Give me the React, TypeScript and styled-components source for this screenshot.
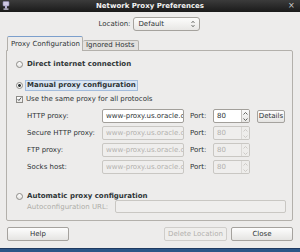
import React from "react"
import styled, { createGlobalStyle } from "styled-components"

const GlobalStyle = createGlobalStyle`
  html, body {
    margin: 0;
    padding: 0;
    background: #edeceb;
  }
  body {
    font-family: "DejaVu Sans", "Liberation Sans", sans-serif;
    font-size: 7px;
    color: #2e3436;
  }
  * {
    box-sizing: border-box;
  }
`

const Window = styled.div`
  width: 300px;
  height: 252px;
  display: flex;
  flex-direction: column;
  background: #edeceb;
  overflow: hidden;
`

const TitleBar = styled.div`
  height: 12px;
  flex: none;
  display: grid;
  grid-template-columns: 12px 1fr 12px;
  align-items: center;
  background: linear-gradient(#3b3b3b, #1a1a1a);
  color: #f2f2f2;
  font-weight: bold;
  font-size: 7px;
  line-height: 12px;
`

const Title = styled.div`
  text-align: center;
`

const CloseMark = styled.div`
  color: #cfcfcf;
  font-size: 8px;
  font-weight: normal;
  text-align: left;
`

const Content = styled.div`
  display: flex;
  flex-direction: column;
  padding: 0 7px 0 6px;
`

const LocationRow = styled.div`
  margin-top: 5px;
  height: 14px;
  display: flex;
  align-items: center;
  justify-content: center;
  gap: 3px;
`

const Combo = styled.div`
  width: 67px;
  height: 14px;
  border: 1px solid #a5a29d;
  border-radius: 3px;
  background: linear-gradient(#fcfcfb, #e8e7e5);
  display: flex;
  align-items: center;
  justify-content: space-between;
  padding: 0 4px 0 4px;
`

const Tabs = styled.div`
  margin-top: 5px;
  height: 15px;
  display: flex;
  align-items: flex-end;
  padding-left: 1px;
  margin-bottom: -1px;
  position: relative;
  z-index: 1;
`

const Tab = styled.div<{ $active?: boolean }>`
  width: ${(p) => (p.$active ? 76 : 56)}px;
  height: ${(p) => (p.$active ? 15 : 11)}px;
  border: 1px solid #b3b0ab;
  border-top-color: ${(p) => (p.$active ? "#7c9fcc" : "#b3b0ab")};
  border-bottom: ${(p) => (p.$active ? "none" : "1px solid #b3b0ab")};
  border-left: ${(p) => (p.$active ? "1px solid #b3b0ab" : "none")};
  border-radius: 2px 2px 0 0;
  background: ${(p) => (p.$active ? "#edeceb" : "#e3e1de")};
  padding-left: 3px;
  line-height: ${(p) => (p.$active ? 14 : 9)}px;
  white-space: nowrap;
`

const Panel = styled.div`
  height: 171px;
  border: 1px solid #b3b0ab;
  border-radius: 0 2px 2px 2px;
  padding-left: 9px;
  display: flex;
  flex-direction: column;
`

const OptionRow = styled.div<{ $top: number; $h?: number }>`
  margin-top: ${(p) => p.$top}px;
  height: ${(p) => p.$h ?? 12}px;
  display: flex;
  align-items: center;
  gap: 3px;
  white-space: nowrap;
`

const Radio = styled.div<{ $checked?: boolean }>`
  width: 7px;
  height: 7px;
  border-radius: 50%;
  border: 1px solid #8d8b87;
  background: ${(p) =>
    p.$checked
      ? "radial-gradient(circle, #2e3436 0 1.2px, #f8f8f7 1.6px)"
      : "linear-gradient(#ffffff, #e4e3e1)"};
  flex: none;
`

const Check = styled.div`
  width: 7px;
  height: 7px;
  border: 1px solid #8d8b87;
  background: linear-gradient(#ffffff, #e8e7e5);
  flex: none;
  display: flex;
  align-items: center;
  justify-content: center;
`

const BoldLabel = styled.span<{ $focus?: boolean }>`
  font-weight: bold;
  line-height: 9px;
  padding: 0 1px;
  margin-left: -1px;
  border: 1px solid ${(p) => (p.$focus ? "#a3bcdc" : "transparent")};
  background: ${(p) => (p.$focus ? "#dbe6f3" : "transparent")};
`

const ProxyRow = styled.div<{ $top: number; $h?: number }>`
  margin-top: ${(p) => p.$top}px;
  height: ${(p) => p.$h ?? 14}px;
  display: flex;
  align-items: center;
  padding-left: 11px;
  white-space: nowrap;
`

const FieldLabel = styled.div<{ $w: number; $disabled?: boolean }>`
  width: ${(p) => p.$w}px;
  flex: none;
  color: ${(p) => (p.$disabled ? "#aeaca8" : "#2e3436")};
`

const Entry = styled.div<{ $w: number; $disabled?: boolean }>`
  width: ${(p) => p.$w}px;
  height: 100%;
  flex: none;
  border: 1px solid ${(p) => (p.$disabled ? "#c9c7c3" : "#a29f9a")};
  border-radius: 2px;
  background: ${(p) => (p.$disabled ? "#efeeed" : "#ffffff")};
  color: ${(p) => (p.$disabled ? "#b3b1ad" : "#2e3436")};
  padding-left: 3px;
  display: flex;
  align-items: center;
  overflow: hidden;
  white-space: nowrap;
`

const PortLabel = styled.div`
  width: 23px;
  margin-left: 6px;
  flex: none;
  color: #2e3436;
`

const Spin = styled.div<{ $disabled?: boolean }>`
  width: 37px;
  height: 100%;
  flex: none;
  border: 1px solid ${(p) => (p.$disabled ? "#c9c7c3" : "#a29f9a")};
  border-radius: 2px;
  background: ${(p) => (p.$disabled ? "#efeeed" : "#ffffff")};
  color: ${(p) => (p.$disabled ? "#b3b1ad" : "#2e3436")};
  display: flex;
  overflow: hidden;
`

const SpinText = styled.div`
  flex: 1;
  padding-left: 3px;
  display: flex;
  align-items: center;
`

const SpinButtons = styled.div<{ $disabled?: boolean }>`
  width: 8px;
  flex: none;
  border-left: 1px solid ${(p) => (p.$disabled ? "#dad8d5" : "#c4c2be")};
  background: ${(p) => (p.$disabled ? "#eeedeb" : "linear-gradient(#fafafa, #e7e6e4)")};
  display: flex;
  flex-direction: column;
  align-items: center;
  justify-content: space-around;
`

const Button = styled.div<{ $w: number; $disabled?: boolean; $gap?: number }>`
  width: ${(p) => p.$w}px;
  height: 14px;
  flex: none;
  margin-left: ${(p) => p.$gap ?? 0}px;
  border: 1px solid ${(p) => (p.$disabled ? "#cfcdca" : "#a5a29e")};
  border-radius: 2px;
  background: ${(p) => (p.$disabled ? "#efeeec" : "linear-gradient(#fdfdfd, #e5e4e2)")};
  color: ${(p) => (p.$disabled ? "#b2b0ac" : "#2e3436")};
  display: flex;
  align-items: center;
  justify-content: center;
  white-space: nowrap;
`

const DetailsButton = styled(Button)`
  height: 13px;
`

const ButtonRow = styled.div`
  margin-top: 6px;
  height: 14px;
  display: flex;
  align-items: center;
  padding-left: 1px;
`

const Spacer = styled.div`
  flex: 1;
`

const DesktopStrip = styled.div`
  margin-top: auto;
  height: 4px;
  flex: none;
  border-top: 1px solid #1f3a61;
  background: #2d5687;
`

const Arrow = ({ up, color }: { up?: boolean; color: string }) => (
  <svg width="5" height="3" viewBox="0 0 5 3">
    <path d={up ? "M0.5 2.5 L2.5 0.5 L4.5 2.5" : "M0.5 0.5 L2.5 2.5 L4.5 0.5"} fill="none" stroke={color} strokeWidth="0.9" />
  </svg>
)

const PortSpin = ({ disabled }: { disabled?: boolean }) => (
  <Spin $disabled={disabled}>
    <SpinText>80</SpinText>
    <SpinButtons $disabled={disabled}>
      <Arrow up color={disabled ? "#c8c6c3" : "#555753"} />
      <Arrow color={disabled ? "#c8c6c3" : "#555753"} />
    </SpinButtons>
  </Spin>
)

const proxies = [
  { label: "HTTP proxy:", top: 5, disabled: false },
  { label: "Secure HTTP proxy:", top: 3, disabled: true },
  { label: "FTP proxy:", top: 3, disabled: true },
  { label: "Socks host:", top: 3, disabled: true },
]

export default function App() {
  return (
    <>
      <GlobalStyle />
      <Window>
        <TitleBar>
          <svg width="12" height="12" viewBox="0 0 12 12">
            <rect x="3" y="1.5" width="6" height="4.5" rx="0.8" fill="#cfc9e3" stroke="#8f88b0" strokeWidth="0.6" />
            <rect x="5" y="6" width="2" height="2.5" fill="#b9b2d6" />
            <rect x="3.5" y="8.5" width="5" height="1.2" fill="#d9d4ec" />
          </svg>
          <Title>Network Proxy Preferences</Title>
          <CloseMark>×</CloseMark>
        </TitleBar>
        <Content>
          <LocationRow>
            <span>Location:</span>
            <Combo>
              <span>Default</span>
              <svg width="4" height="8" viewBox="0 0 4 8">
                <path d="M0.5 3 L2 1.2 L3.5 3 M0.5 5 L2 6.8 L3.5 5" fill="none" stroke="#555753" strokeWidth="0.8" />
              </svg>
            </Combo>
          </LocationRow>
          <Tabs>
            <Tab $active>Proxy Configuration</Tab>
            <Tab>Ignored Hosts</Tab>
          </Tabs>
          <Panel>
            <OptionRow $top={7}>
              <Radio />
              <BoldLabel>Direct internet connection</BoldLabel>
            </OptionRow>
            <OptionRow $top={9}>
              <Radio $checked />
              <BoldLabel $focus>Manual proxy configuration</BoldLabel>
            </OptionRow>
            <OptionRow $top={3} $h={10}>
              <Check>
                <svg width="6" height="6" viewBox="0 0 6 6">
                  <path d="M0.8 3.2 L2.3 4.8 L5.2 1" fill="none" stroke="#2e3436" strokeWidth="1" />
                </svg>
              </Check>
              <span>Use the same proxy for all protocols</span>
            </OptionRow>
            {proxies.map((p) => (
              <ProxyRow key={p.label} $top={p.top}>
                <FieldLabel $w={75}>{p.label}</FieldLabel>
                <Entry $w={82} $disabled={p.disabled}>www-proxy.us.oracle.c</Entry>
                <PortLabel>Port:</PortLabel>
                <PortSpin disabled={p.disabled} />
                {!p.disabled && (
                  <DetailsButton $w={28} $gap={7}>
                    Details
                  </DetailsButton>
                )}
              </ProxyRow>
            ))}
            <OptionRow $top={18} $h={9}>
              <Radio />
              <BoldLabel>Automatic proxy configuration</BoldLabel>
            </OptionRow>
            <ProxyRow $top={-1} $h={13}>
              <FieldLabel $w={88} $disabled>
                Autoconfiguration URL:
              </FieldLabel>
              <Entry $w={171} $disabled />
            </ProxyRow>
          </Panel>
          <ButtonRow>
            <Button $w={62}>Help</Button>
            <Spacer />
            <Button $w={63} $disabled>
              Delete Location
            </Button>
            <Button $w={62} $gap={4}>
              Close
            </Button>
          </ButtonRow>
        </Content>
        <DesktopStrip />
      </Window>
    </>
  )
}
